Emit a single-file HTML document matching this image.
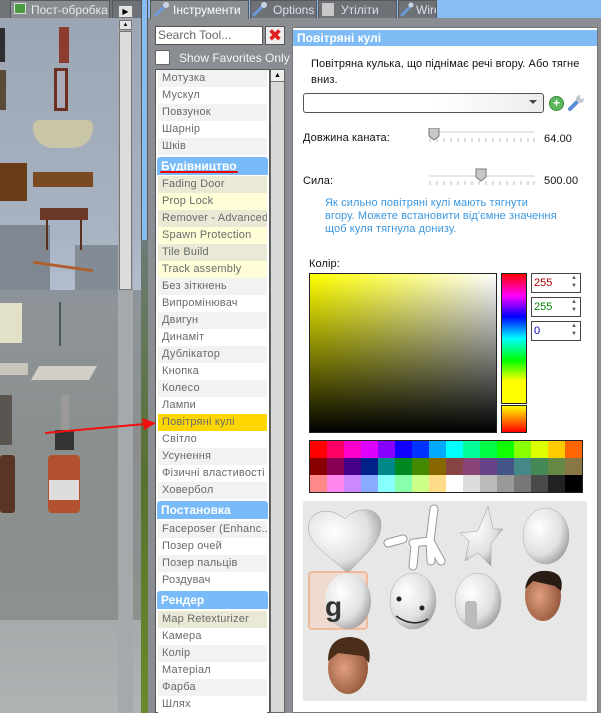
<!DOCTYPE html>
<html><head><meta charset="utf-8"><style>
*{margin:0;padding:0;box-sizing:border-box}
body{width:601px;height:713px;overflow:hidden;position:relative;font-family:"Liberation Sans","DejaVu Sans",sans-serif;font-size:11px;background:#8a8e92}
.a{position:absolute}
.row{position:absolute;left:158px;width:109px;height:17px;line-height:17px;padding-left:4px;color:#6a6a6a;font-size:11px;white-space:nowrap;overflow:hidden;letter-spacing:.2px}
.g{background:#f2f2f2}.w{background:#fff}.t{background:#e9e9d6}.y{background:#fffed9}.s{background:#ffd700}
.hd{position:absolute;left:157px;width:111px;height:18px;line-height:18px;padding-left:4px;background:#79bbf9;color:#fff;font-weight:bold;font-size:12px;border-radius:3px 3px 0 0}
.tab{position:absolute;top:0;height:18px;line-height:18px;color:#dde;font-size:12px;background:#6e7276;border:1px solid #55595c;border-bottom:none;padding-left:22px;white-space:nowrap;overflow:hidden}
.pal div{float:left;width:17px;height:17px}
.tx{letter-spacing:.1px;white-space:nowrap}
</style></head><body>
<div class="a" style="left:0;top:0;width:141px;height:713px;background:linear-gradient(#9aa4b2 0,#a8b3c2 230px,#b3bfcf 300px,#8e9499 300px,#8a8f8e 440px,#8b918d 620px,#a6aaab 620px,#b0b3b4 713px)"></div>
<div class="a" style="left:0;top:225px;width:50px;height:70px;background:#7f8791"></div>
<div class="a" style="left:75px;top:245px;width:45px;height:45px;background:#838b95"></div>
<div class="a" style="left:0;top:290px;width:141px;height:10px;background:#8d939a"></div>
<div class="a" style="left:0;top:28px;width:5px;height:34px;background:#2e2e30"></div>
<div class="a" style="left:59px;top:27px;width:10px;height:36px;background:#8a3c30"></div>
<div class="a" style="left:54px;top:68px;width:14px;height:43px;border:3px solid #6b3020;background:#aab"></div>
<div class="a" style="left:0;top:70px;width:6px;height:40px;background:#5a4a3a"></div>
<div class="a" style="left:33px;top:120px;width:60px;height:28px;background:#c9c6a8;border-radius:6px 6px 20px 20px"></div>
<div class="a" style="left:0;top:163px;width:27px;height:38px;background:#6a3d1a"></div>
<div class="a" style="left:33px;top:172px;width:60px;height:15px;background:#7a4a20"></div>
<div class="a" style="left:40px;top:208px;width:48px;height:12px;background:#6a3828"></div>
<div class="a" style="left:46px;top:220px;width:2px;height:30px;background:#5a3020"></div>
<div class="a" style="left:80px;top:220px;width:2px;height:30px;background:#5a3020"></div>
<div class="a" style="left:33px;top:265px;width:60px;height:3px;background:#b06030;transform:rotate(8deg)"></div>
<div class="a" style="left:0;top:303px;width:22px;height:40px;background:#e3e0c8"></div>
<div class="a" style="left:59px;top:302px;width:2px;height:44px;background:#4a5a50"></div>
<div class="a" style="left:0;top:363px;width:28px;height:12px;background:#c8c5bb"></div>
<div class="a" style="left:35px;top:366px;width:58px;height:14px;background:#d2d0c6;transform:skewX(-30deg)"></div>
<div class="a" style="left:0;top:395px;width:12px;height:50px;background:#5a5550"></div>
<div class="a" style="left:61px;top:395px;width:8px;height:35px;background:#9a9a98"></div>
<div class="a" style="left:55px;top:430px;width:19px;height:20px;background:#333"></div>
<div class="a" style="left:0;top:455px;width:15px;height:58px;background:#5a3424;border-radius:3px"></div>
<div class="a" style="left:48px;top:455px;width:32px;height:58px;background:#b2512d;border-radius:4px"></div>
<div class="a" style="left:49px;top:480px;width:30px;height:20px;background:#ddd"></div>
<div class="a" style="left:118px;top:19px;width:15px;height:694px;background:#a6a9ab"></div>
<div class="a" style="left:119px;top:20px;width:13px;height:10px;background:#e4e4e4;border:1px solid #777;font-size:6px;line-height:8px;text-align:center">▲</div>
<div class="a" style="left:119px;top:31px;width:13px;height:259px;background:#dcdcdc;border:1px solid #777"></div>
<div class="a" style="left:0;top:0;width:141px;height:18px;background:#6f7377"></div>
<div class="tab" style="left:10px;width:100px;background:#8a8d90;color:#e8e8e8;padding-left:20px">Пост-обробка</div>
<div class="a" style="left:14px;top:3px;width:12px;height:11px;background:#4a9a40;border:1px solid #ddd"></div>
<div class="tab" style="left:112px;width:30px"></div>
<div class="a" style="left:118px;top:5px;width:15px;height:13px;background:#e4e4e4;border:1px solid #777;font-size:8px;text-align:center;line-height:11px">▶</div>
<div class="a" style="left:141px;top:0;width:7px;height:713px;background:#87bdf3;border-left:1px solid #555;border-right:1px solid #555"></div>
<div class="a" style="left:141px;top:240px;width:7px;height:473px;background:linear-gradient(#6e7a78,#5a7030 50%,#6a8a2a)"></div>
<div class="a" style="left:148px;top:0;width:453px;height:18px;background:#88bcf2"></div>
<div class="tab" style="left:150px;width:99px;background:#8a8e92;color:#fff;height:19px">Інструменти</div>
<div class="tab" style="left:250px;width:67px">Options</div>
<div class="tab" style="left:318px;width:79px">Утіліти</div>
<div class="tab" style="left:398px;width:39px;padding-left:17px">Wire</div>
<svg class="a" style="left:154px;top:2px" width="300" height="15"><g stroke="#6a9ad8" stroke-width="3" stroke-linecap="round"><line x1="2" y1="13" x2="11" y2="4"/><line x1="100" y1="13" x2="109" y2="4"/><line x1="248" y1="13" x2="256" y2="5"/></g><g fill="#c8d4e4"><circle cx="12" cy="3" r="3"/><circle cx="110" cy="3" r="3"/><circle cx="257" cy="3" r="2.5"/></g><rect x="168" y="1" width="12" height="13" fill="#c8c8c8"/></svg>
<div class="a" style="left:155px;top:26px;width:108px;height:19px;background:#fff;border:1px solid #555;color:#666;font-size:12px;line-height:17px;padding-left:2px">Search Tool...</div>
<div class="a" style="left:265px;top:26px;width:20px;height:19px;background:#eee;border:1px solid #555;color:#e02020;font-weight:bold;font-size:17px;line-height:17px;text-align:center">✖</div>
<div class="a" style="left:155px;top:50px;width:15px;height:15px;background:#fff;border:1px solid #666;border-radius:2px"></div>
<div class="a" style="left:179px;top:51px;color:#f4f4f4;font-size:12px">Show Favorites Only</div>
<div class="a" style="left:155px;top:69px;width:115px;height:644px;background:#fff;border:1px solid #555"></div>
<div class="a" style="left:270px;top:69px;width:15px;height:644px;background:#d8d8d8;border:1px solid #666"></div>
<div class="a" style="left:271px;top:70px;width:13px;height:12px;background:#eee;border-bottom:1px solid #777;font-size:7px;text-align:center;line-height:12px">▲</div>
<div class="row g" style="top:70px">Мотузка</div>
<div class="row w" style="top:87px">Мускул</div>
<div class="row g" style="top:104px">Повзунок</div>
<div class="row w" style="top:121px">Шарнір</div>
<div class="row g" style="top:138px">Шків</div>
<div class="hd" style="top:157px">Будівництво</div>
<div class="a" style="left:160px;top:171px;width:78px;height:2px;background:#e00;border-radius:1px"></div>
<div class="row t" style="top:176px">Fading Door</div>
<div class="row y" style="top:193px">Prop Lock</div>
<div class="row t" style="top:210px">Remover - Advanced</div>
<div class="row y" style="top:227px">Spawn Protection</div>
<div class="row t" style="top:244px">Tile Build</div>
<div class="row y" style="top:261px">Track assembly</div>
<div class="row g" style="top:278px">Без зіткнень</div>
<div class="row w" style="top:295px">Випромінювач</div>
<div class="row g" style="top:312px">Двигун</div>
<div class="row w" style="top:329px">Динаміт</div>
<div class="row g" style="top:346px">Дублікатор</div>
<div class="row w" style="top:363px">Кнопка</div>
<div class="row g" style="top:380px">Колесо</div>
<div class="row w" style="top:397px">Лампи</div>
<div class="row s" style="top:414px">Повітряні кулі</div>
<div class="row w" style="top:431px">Світло</div>
<div class="row g" style="top:448px">Усунення</div>
<div class="row w" style="top:465px">Фізичні властивості</div>
<div class="row g" style="top:482px">Ховербол</div>
<div class="hd" style="top:501px">Постановка</div>
<div class="row g" style="top:521px">Faceposer (Enhanc...</div>
<div class="row w" style="top:538px">Позер очей</div>
<div class="row g" style="top:555px">Позер пальців</div>
<div class="row w" style="top:572px">Роздувач</div>
<div class="hd" style="top:591px">Рендер</div>
<div class="row t" style="top:611px">Map Retexturizer</div>
<div class="row w" style="top:628px">Камера</div>
<div class="row g" style="top:645px">Колір</div>
<div class="row w" style="top:662px">Матеріал</div>
<div class="row g" style="top:679px">Фарба</div>
<div class="row w" style="top:696px">Шлях</div>
<svg class="a" style="left:40px;top:415px" width="120" height="25"><line x1="5" y1="18" x2="105" y2="9" stroke="#f01010" stroke-width="2"/><polygon points="116,8 102,3 104,15" fill="#f01010"/></svg>
<div class="a" style="left:292px;top:27px;width:306px;height:686px;background:#fff;border:1px solid #777"></div>
<div class="a" style="left:293px;top:30px;width:304px;height:16px;background:#7fbcf6;color:#fff;font-weight:bold;font-size:12px;line-height:16px;padding-left:4px">Повітряні кулі</div>
<div class="a tx" style="left:311px;top:56px;color:#111;font-size:11px;line-height:16px">Повітряна кулька, що піднімає речі вгору. Або тягне<br>вниз.</div>
<div class="a" style="left:303px;top:93px;width:241px;height:20px;border:1px solid #555;border-radius:3px;background:linear-gradient(90deg,#fff 55%,#ececec)"></div>
<div class="a" style="left:529px;top:100px;width:0;height:0;border-left:4px solid transparent;border-right:4px solid transparent;border-top:4px solid #444"></div>
<div class="a" style="left:549px;top:96px;width:15px;height:15px;border-radius:50%;background:#5cb85c;border:1px solid #3a8a3a;color:#fff;font-weight:bold;font-size:12px;line-height:12px;text-align:center">+</div>
<svg class="a" style="left:567px;top:94px" width="18" height="18"><line x1="3" y1="15" x2="11" y2="7" stroke="#5a8ad8" stroke-width="4" stroke-linecap="round"/><circle cx="13" cy="5" r="4" fill="#c0c8d0"/><circle cx="15" cy="3" r="2" fill="#fff"/></svg>
<div class="a tx" style="left:303px;top:132px;font-size:11px;color:#111">Довжина каната:</div>
<div class="a tx" style="left:303px;top:175px;font-size:11px;color:#111">Сила:</div>
<div class="a tx" style="left:544px;top:133px;font-size:11px;color:#111">64.00</div>
<div class="a tx" style="left:544px;top:175px;font-size:11px;color:#111">500.00</div>
<svg class="a" style="left:428px;top:128px" width="110" height="62">
<line x1="1" y1="4" x2="106" y2="4" stroke="#ccc"/><line x1="1" y1="48" x2="106" y2="48" stroke="#ccc"/>
<g stroke="#bbb"><path d="M2 10v4M9 10v4M16 10v4M23 10v4M30 10v4M37 10v4M44 10v4M51 10v4M58 10v4M65 10v4M72 10v4M79 10v4M86 10v4M93 10v4M100 10v4M106 10v4"/><path d="M2 53v4M9 53v4M16 53v4M23 53v4M30 53v4M37 53v4M44 53v4M51 53v4M58 53v4M65 53v4M72 53v4M79 53v4M86 53v4M93 53v4M100 53v4M106 53v4"/></g>
<path d="M1 0h10v8l-5 4l-5-4z" fill="#c8c8c8" stroke="#777"/><path d="M48 41h10v8l-5 4l-5-4z" fill="#c8c8c8" stroke="#777"/></svg>
<div class="a tx" style="left:325px;top:197px;color:#3b97df;font-size:11px;line-height:13px">Як сильно повітряні кулі мають тягнути<br>вгору. Можете встановити від'ємне значення<br>щоб куля тягнула донизу.</div>
<div class="a tx" style="left:309px;top:258px;font-size:11px;color:#111">Колір:</div>
<div class="a" style="left:309px;top:273px;width:188px;height:160px;border:1px solid #222;background:linear-gradient(to bottom,rgba(0,0,0,0),#000),linear-gradient(to right,#ff0,#fff)"></div>
<div class="a" style="left:501px;top:273px;width:26px;height:131px;border:1px solid #222;background:linear-gradient(#f00,#f0f 17%,#00f 33%,#0ff 50%,#0f0 67%,#ff0 83%,#ff0)"></div>
<div class="a" style="left:501px;top:405px;width:26px;height:28px;border:1px solid #222;background:linear-gradient(#ff0,#f00)"></div>
<div class="a" style="left:531px;top:273px;width:50px;height:20px;border:1px solid #444;color:#a00;font-size:11px;line-height:18px;padding-left:2px">255<span style="position:absolute;right:3px;top:0;font-size:6px;color:#555;line-height:8px">▲<br>▼</span></div>
<div class="a" style="left:531px;top:297px;width:50px;height:20px;border:1px solid #444;color:#080;font-size:11px;line-height:18px;padding-left:2px">255<span style="position:absolute;right:3px;top:0;font-size:6px;color:#555;line-height:8px">▲<br>▼</span></div>
<div class="a" style="left:531px;top:321px;width:50px;height:20px;border:1px solid #444;color:#00a;font-size:11px;line-height:18px;padding-left:2px">0<span style="position:absolute;right:3px;top:0;font-size:6px;color:#555;line-height:8px">▲<br>▼</span></div>
<div class="a pal" style="left:309px;top:440px;width:274px;height:53px;border:1px solid #222">
<div style="background:#f00"></div><div style="background:#f06"></div><div style="background:#f0c"></div><div style="background:#d0f"></div><div style="background:#80f"></div><div style="background:#10f"></div><div style="background:#03f"></div><div style="background:#0af"></div><div style="background:#0ff"></div><div style="background:#0f9"></div><div style="background:#0f4"></div><div style="background:#1f0"></div><div style="background:#8f0"></div><div style="background:#df0"></div><div style="background:#fc0"></div><div style="background:#f60"></div>
<div style="background:#800"></div><div style="background:#805"></div><div style="background:#408"></div><div style="background:#028"></div><div style="background:#088"></div><div style="background:#082"></div><div style="background:#480"></div><div style="background:#860"></div><div style="background:#844"></div><div style="background:#847"></div><div style="background:#648"></div><div style="background:#458"></div><div style="background:#488"></div><div style="background:#485"></div><div style="background:#684"></div><div style="background:#874"></div>
<div style="background:#f88"></div><div style="background:#f8e"></div><div style="background:#c8f"></div><div style="background:#8af"></div><div style="background:#8ff"></div><div style="background:#8fa"></div><div style="background:#cf8"></div><div style="background:#fd8"></div><div style="background:#fff"></div><div style="background:#ddd"></div><div style="background:#bbb"></div><div style="background:#999"></div><div style="background:#777"></div><div style="background:#4a4a4a"></div><div style="background:#222"></div><div style="background:#000"></div>
</div>
<div class="a" style="left:303px;top:501px;width:284px;height:200px;background:#e7e7e7;border-radius:2px"></div>
<svg class="a" style="left:303px;top:501px" width="284" height="200">
<defs><radialGradient id="b" cx="0.35" cy="0.35" r="0.8"><stop offset="0" stop-color="#fff"/><stop offset="0.6" stop-color="#e0e0e0"/><stop offset="1" stop-color="#8a8a8a"/></radialGradient>
<radialGradient id="f" cx="0.4" cy="0.5" r="0.7"><stop offset="0" stop-color="#e0a080"/><stop offset="1" stop-color="#8a4a30"/></radialGradient></defs>
<path d="M45 72C20 50 2 40 6 22C10 8 28 6 42 18C54 4 78 6 78 24C78 42 60 55 45 72Z" fill="url(#b)" stroke="#999" stroke-width=".5"/>
<g stroke="#999" stroke-width="9" stroke-linecap="round" fill="none"><path d="M131 8L127 40L110 42M100 38L85 42M127 40L138 60M112 44L110 65M127 40L128 60"/></g>
<g stroke="#fff" stroke-width="7" stroke-linecap="round" fill="none"><path d="M131 8L127 40L110 42M100 38L85 42M127 40L138 60M112 44L110 65M127 40L128 60"/></g>
<path d="M185 5L190 28L200 28L188 42L188 65L175 52L162 60L166 40L157 32L175 30Z" fill="url(#b)" stroke="#999" stroke-width=".5"/>
<ellipse cx="243" cy="35" rx="23" ry="28" fill="url(#b)" stroke="#aaa" stroke-width=".5"/>
<rect x="6" y="71" width="58" height="57" rx="3" fill="#f0d8c8" stroke="#f4a070" stroke-width="1.5" opacity=".8"/>
<ellipse cx="45" cy="100" rx="23" ry="28" fill="url(#b)"/><text x="22" y="115" font-size="28" font-weight="bold" font-family="Liberation Sans" fill="#333">g</text>
<ellipse cx="110" cy="100" rx="23" ry="28" fill="url(#b)" stroke="#aaa" stroke-width=".5"/>
<path d="M93 115Q110 127 125 118" stroke="#222" stroke-width="1.5" fill="none"/><circle cx="96" cy="98" r="2.5" fill="#222"/><circle cx="119" cy="107" r="2.5" fill="#222"/>
<ellipse cx="175" cy="100" rx="23" ry="28" fill="url(#b)" stroke="#aaa" stroke-width=".5"/>
<rect x="162" y="100" width="12" height="25" fill="#bbb" rx="3"/>
<ellipse cx="240" cy="95" rx="18" ry="25" fill="url(#f)"/><path d="M222 88Q225 68 245 70Q262 72 258 90L252 85L230 80Z" fill="#2a1c14"/>
<ellipse cx="45" cy="167" rx="20" ry="26" fill="url(#f)"/><path d="M25 160Q25 136 48 136Q70 138 66 162L60 155L35 152Z" fill="#4a2e1a"/>
</svg>
</body></html>
